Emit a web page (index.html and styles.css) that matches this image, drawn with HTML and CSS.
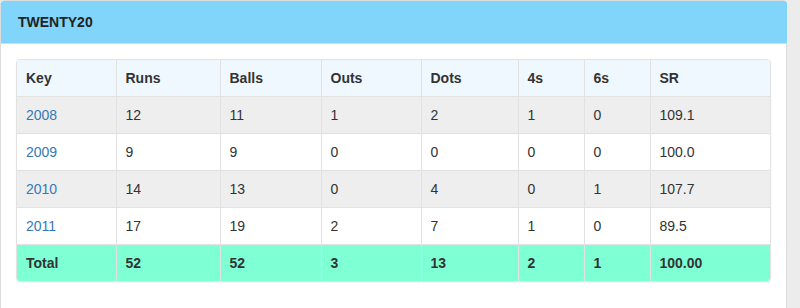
FILE: index.html
```html
<!DOCTYPE html>
<html>
<head>
<meta charset="utf-8">
<link rel="stylesheet" href="styles.css">
</head>
<body>
<div class="panel">
  <div class="panel-heading">TWENTY20</div>
  <div class="panel-body">
    <div class="table-wrap">
      <table class="stats">
        <colgroup>
          <col class="c-key"><col class="c-runs"><col class="c-balls"><col class="c-outs">
          <col class="c-dots"><col class="c-4s"><col class="c-6s"><col class="c-sr">
        </colgroup>
        <thead>
          <tr><th>Key</th><th>Runs</th><th>Balls</th><th>Outs</th><th>Dots</th><th>4s</th><th>6s</th><th>SR</th></tr>
        </thead>
        <tbody>
          <tr class="odd"><td><a href="#">2008</a></td><td>12</td><td>11</td><td>1</td><td>2</td><td>1</td><td>0</td><td>109.1</td></tr>
          <tr><td><a href="#">2009</a></td><td>9</td><td>9</td><td>0</td><td>0</td><td>0</td><td>0</td><td>100.0</td></tr>
          <tr class="odd"><td><a href="#">2010</a></td><td>14</td><td>13</td><td>0</td><td>4</td><td>0</td><td>1</td><td>107.7</td></tr>
          <tr><td><a href="#">2011</a></td><td>17</td><td>19</td><td>2</td><td>7</td><td>1</td><td>0</td><td>89.5</td></tr>
          <tr class="total"><td>Total</td><td>52</td><td>52</td><td>3</td><td>13</td><td>2</td><td>1</td><td>100.00</td></tr>
        </tbody>
      </table>
    </div>
  </div>
</div>
</body>
</html>
```

FILE: styles.css
```css
html, body {
  margin: 0;
  padding: 0;
}
body {
  background: #ececec;
  font-family: "Liberation Sans", Arial, sans-serif;
  font-size: 14px;
  line-height: 20px;
  color: #333;
  height: 308px;
  overflow: hidden;
}
.panel {
  width: 787px;
  height: 330px;
  background: #fff;
  border: 1px solid #dcdcdc;
  border-radius: 4px;
  box-sizing: border-box;
}
.panel-heading {
  background: #81d4fa;
  border-bottom: 1px solid #b3e5fc;
  border-radius: 3px 3px 0 0;
  height: 43px;
  box-sizing: border-box;
  padding: 11px 17px;
  font-weight: bold;
  color: #222;
  margin-right: -1px;
}
.panel-body {
  padding: 15px 15px;
}
.table-wrap {
  border: 1px solid #e2e2e2;
  border-radius: 4px;
  overflow: hidden;
  box-shadow: 0 1px 2px rgba(0,0,0,0.05);
}
.stats {
  width: 100%;
  border-collapse: collapse;
  table-layout: fixed;
}
.c-key { width: 99px; }
.c-runs { width: 104px; }
.c-balls { width: 101px; }
.c-outs { width: 100px; }
.c-dots { width: 97px; }
.c-4s { width: 66px; }
.c-6s { width: 66px; }
.stats th, .stats td {
  padding: 8px 8px 8px 9px;
  text-align: left;
  border-left: 1px solid #e2e2e2;
  border-top: 1px solid #e2e2e2;
  height: 20px;
}
.stats th:first-child, .stats td:first-child {
  border-left: none;
}
.stats thead th {
  border-top: none;
  background: #f0f8ff;
  font-weight: bold;
}
.stats tr.odd td {
  background: #eeeeee;
}
.stats tr.total td {
  background: #7fffd4;
  font-weight: bold;
}
.stats a {
  color: #337ab7;
  text-decoration: none;
}
```
